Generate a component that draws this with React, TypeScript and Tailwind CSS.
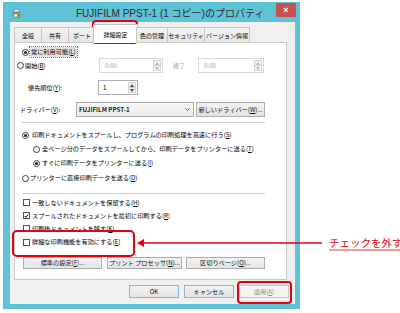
import React from 'react'

const jp = "font-['Noto_Sans_CJK_JP',sans-serif]"

function Acc({ k }: { k: string }) {
  return (
    <>
      (<span className="underline underline-offset-[1px]">{k}</span>)
    </>
  )
}

function Radio({ on }: { on?: boolean }) {
  return (
    <span className="flex h-[7px] w-[7px] shrink-0 items-center justify-center rounded-full border border-[#3c3c3c] bg-white">
      {on && <span className="h-[3px] w-[3px] rounded-full bg-[#1a1a1a]" />}
    </span>
  )
}

function Check({ on }: { on?: boolean }) {
  return (
    <span className="flex h-[7px] w-[7px] shrink-0 items-center justify-center border border-[#555] bg-white">
      {on && (
        <svg width="6" height="6" viewBox="0 0 6 6">
          <path d="M0.7 3 L2.3 4.7 L5.3 1" fill="none" stroke="#111" strokeWidth="1.2" />
        </svg>
      )}
    </span>
  )
}

function Arrows({ disabled }: { disabled?: boolean }) {
  const c = disabled ? '#b5b5b5' : '#444'
  return (
    <div className="my-[1px] mr-[1px] flex w-[8px] flex-col border border-[#d4d4d4] bg-[#f3f3f3]">
      <div className="flex flex-1 items-center justify-center border-b border-[#d4d4d4]">
        <svg width="4" height="3" viewBox="0 0 4 3"><path d="M0 3 L2 0 L4 3Z" fill={c} /></svg>
      </div>
      <div className="flex flex-1 items-center justify-center">
        <svg width="4" height="3" viewBox="0 0 4 3"><path d="M0 0 L2 3 L4 0Z" fill={c} /></svg>
      </div>
    </div>
  )
}

function Btn({ children, className = '', kind }: { children: React.ReactNode; className?: string; kind?: 'def' | 'off' }) {
  const look =
    kind === 'def'
      ? 'border-[#7eb4ea] bg-gradient-to-b from-[#f3f3f3] to-[#e3e3e3] text-[#111]'
      : kind === 'off'
        ? 'border-[#c9c9c9] bg-[#f4f4f4] text-[#8a8a8a]'
        : 'border-[#adadad] bg-gradient-to-b from-[#f2f2f2] to-[#e3e3e3] text-[#111]'
  return (
    <div className={`flex items-center justify-center whitespace-nowrap border ${look} ${className}`}>{children}</div>
  )
}

const tabs: { label: string; w: string; on?: boolean }[] = [
  { label: '全般', w: 'w-[27px]' },
  { label: '共有', w: 'w-[27px]' },
  { label: 'ポート', w: 'w-[27px]' },
  { label: '詳細設定', w: 'w-[45px]', on: true },
  { label: '色の管理', w: 'w-[31px]' },
  { label: 'セキュリティ', w: 'w-[37px]' },
  { label: 'バージョン情報', w: 'w-[46px]' },
]

export default function App() {
  return (
    <div className={`relative h-[313px] w-[400px] overflow-hidden bg-white pl-[3px] pt-[2px] text-[6.2px] text-[#000] ${jp}`}>
      {/* window */}
      <div className="flex h-[307px] w-[297px] flex-col bg-[#5ec3d6]">
        <div className="flex h-[20px] items-start">
          <svg className="ml-[9px] mt-[7px]" width="9" height="9" viewBox="0 0 9 9">
            <rect x="2" y="0.5" width="5" height="2.5" fill="#fff" stroke="#777" strokeWidth="0.6" />
            <rect x="0.5" y="2.5" width="8" height="4" rx="0.6" fill="#8c8c8c" />
            <rect x="2" y="5" width="5" height="3" fill="#fff" stroke="#777" strokeWidth="0.6" />
            <circle cx="6.8" cy="7" r="1.9" fill="#3aa53a" />
            <path d="M5.9 7 L6.6 7.7 L7.7 6.3" fill="none" stroke="#fff" strokeWidth="0.6" />
          </svg>
          <span className="ml-[55px] mt-[5px] text-[10px] leading-[14px] text-[#2b2b2b] font-['Liberation_Sans','Noto_Sans_CJK_JP',sans-serif]">
            FUJIFILM PPST-1 (1 コピー)のプロパティ
          </span>
          <div className="ml-auto mr-[4px] mt-[1px] flex h-[14px] w-[20px] items-center justify-center bg-[#c75050] text-[9px] font-bold leading-none text-white font-['Liberation_Sans',sans-serif]">
            ×
          </div>
        </div>

        {/* body */}
        <div className="ml-[7px] flex h-[282px] w-[285px] flex-col bg-[#f0f0f0] pl-[4px] pt-[2px]">
          <div className="relative z-10 flex h-[18px] items-end text-[6px]">
            {tabs.map(t =>
              t.on ? (
                <div
                  key={t.label}
                  className={`-mb-px mx-[-2px] flex h-[19px] items-center justify-center whitespace-nowrap border border-b-0 border-[#c4c4c4] bg-white ${t.w}`}
                >
                  {t.label}
                </div>
              ) : (
                <div
                  key={t.label}
                  className={`flex h-[15px] items-center justify-center whitespace-nowrap border-l border-t border-[#c4c4c4] bg-gradient-to-b from-[#f3f3f3] to-[#e6e6e6] last:border-r ${t.w}`}
                >
                  {t.label}
                </div>
              )
            )}
          </div>

          {/* panel */}
          <div className="flex h-[238px] w-[273px] flex-col whitespace-nowrap border border-[#c9c9c9] bg-white">
            <div className="mt-[3px] flex h-[12px] items-center">
              <span className="ml-[7px]"><Radio on /></span>
              <span className="ml-[1px] bg-[#e4e4e4] px-[1px] leading-[10px] outline outline-1 outline-dotted outline-[#777]">
                常に利用可能<Acc k="L" />
              </span>
            </div>

            <div className="flex h-[15px] items-center">
              <span className="ml-[2px]"><Radio /></span>
              <span className="ml-[1px] w-[74px]">
                開始<Acc k="B" />
              </span>
              <div className="flex h-[15px] w-[64px] border border-[#d9d9d9] bg-white">
                <span className="flex-1 pl-[5px] leading-[13px] text-[#a3a3a3]">0:00</span>
                <Arrows disabled />
              </div>
              <span className="ml-[10px] w-[25px] text-[#a3a3a3]">終了</span>
              <div className="flex h-[15px] w-[66px] border border-[#d9d9d9] bg-white">
                <span className="flex-1 pl-[5px] leading-[13px] text-[#a3a3a3]">0:00</span>
                <Arrows disabled />
              </div>
            </div>

            <div className="mt-[7px] flex h-[15px] items-center">
              <span className="ml-[13px] w-[70px]">
                優先順位<Acc k="Y" />:
              </span>
              <div className="flex h-[15px] w-[40px] border border-[#abadb3] bg-white">
                <span className="flex-1 pl-[4px] leading-[13px]">1</span>
                <Arrows />
              </div>
            </div>

            <div className="mt-[7px] flex h-[15px] items-center">
              <span className="ml-[5px] w-[56px]">
                ドライバー<Acc k="V" />:
              </span>
              <div className="flex h-[15px] w-[118px] items-center border border-[#adadad] bg-gradient-to-b from-[#f6f6f6] to-[#ececec]">
                <span className="flex-1 pl-[2px] font-bold text-[#222]">FUJIFILM PPST-1</span>
                <svg className="mr-[3px]" width="5" height="3" viewBox="0 0 5 3">
                  <path d="M0.4 0.4 L2.5 2.5 L4.6 0.4" fill="none" stroke="#444" strokeWidth="0.8" />
                </svg>
              </div>
              <Btn className="ml-[2px] h-[15px] w-[69px]">
                新しいドライバー<Acc k="W" />...
              </Btn>
            </div>

            <div className="ml-[7px] mt-[5px] h-px w-[243px] bg-[#cfcfcf]" />

            <div className="mt-[5px] flex h-[14px] items-center">
              <span className="ml-[7px]"><Radio on /></span>
              <span className="ml-[3px]">
                印刷ドキュメントをスプールし、プログラムの印刷処理を高速に行う<Acc k="S" />
              </span>
            </div>
            <div className="flex h-[14px] items-center">
              <span className="ml-[18px]"><Radio /></span>
              <span className="ml-[2px]">
                全ページ分のデータをスプールしてから、印刷データをプリンターに送る<Acc k="T" />
              </span>
            </div>
            <div className="flex h-[14px] items-center">
              <span className="ml-[18px]"><Radio on /></span>
              <span className="ml-[2px]">
                すぐに印刷データをプリンターに送る<Acc k="I" />
              </span>
            </div>
            <div className="mt-[1px] flex h-[14px] items-center">
              <span className="ml-[7px]"><Radio /></span>
              <span className="ml-[1px]">
                プリンターに直接印刷データを送る<Acc k="D" />
              </span>
            </div>

            <div className="ml-[7px] mt-[8px] h-px w-[243px] bg-[#cfcfcf]" />

            <div className="mt-[2px] flex h-[13px] items-center">
              <span className="ml-[8px]"><Check /></span>
              <span className="ml-[2px]">
                一致しないドキュメントを保留する<Acc k="H" />
              </span>
            </div>
            <div className="flex h-[13px] items-center">
              <span className="ml-[8px]"><Check on /></span>
              <span className="ml-[2px]">
                スプールされたドキュメントを最初に印刷する<Acc k="R" />
              </span>
            </div>
            <div className="flex h-[13px] items-center">
              <span className="ml-[8px]"><Check /></span>
              <span className="ml-[2px]">
                印刷後ドキュメントを残す<Acc k="K" />
              </span>
            </div>
            <div className="flex h-[14px] items-center">
              <span className="ml-[8px]"><Check /></span>
              <span className="ml-[2px]">
                詳細な印刷機能を有効にする<Acc k="E" />
              </span>
            </div>

            <div className="mt-[8px] flex h-[12px] items-center">
              <Btn className="ml-[8px] h-[12px] w-[79px]">
                標準の設定<Acc k="F" />...
              </Btn>
              <Btn className="ml-[5px] h-[12px] w-[75px]">
                プリント プロセッサ<Acc k="N" />...
              </Btn>
              <Btn className="ml-[4px] h-[12px] w-[79px]">
                区切りページ<Acc k="O" />...
              </Btn>
            </div>
          </div>

          <div className="mt-[5px] flex w-[275px] justify-end gap-[5px]">
            <Btn kind="def" className="h-[13px] w-[50px]">OK</Btn>
            <Btn className="h-[13px] w-[50px]">キャンセル</Btn>
            <Btn kind="off" className="h-[13px] w-[50px]">
              適用<Acc k="A" />
            </Btn>
          </div>
        </div>
      </div>

      {/* annotations */}
      <div className="absolute left-[92px] top-[20px] h-[24px] w-[46px] rounded-[4px] border-2 border-[#e60012]" />
      <div className="absolute left-[12px] top-[230px] h-[27px] w-[123px] rounded-[5px] border-2 border-[#e60012]" />
      <div className="absolute left-[237px] top-[281px] h-[23px] w-[55px] rounded-[4px] border-2 border-[#e60012]" />
      <svg className="absolute left-[135px] top-[236px]" width="190" height="14" viewBox="0 0 190 14">
        <path d="M2 7 L9 3 L9 11Z" fill="#e60012" />
        <line x1="8" y1="7" x2="187" y2="7" stroke="#e60012" strokeWidth="1.5" />
      </svg>
      <span className="absolute left-[329px] top-[235px] whitespace-nowrap text-[10.5px] leading-[15px] text-[#e60012] underline decoration-[#f29b9b] decoration-2 underline-offset-[2px]">
        チェックを外す
      </span>
    </div>
  )
}
